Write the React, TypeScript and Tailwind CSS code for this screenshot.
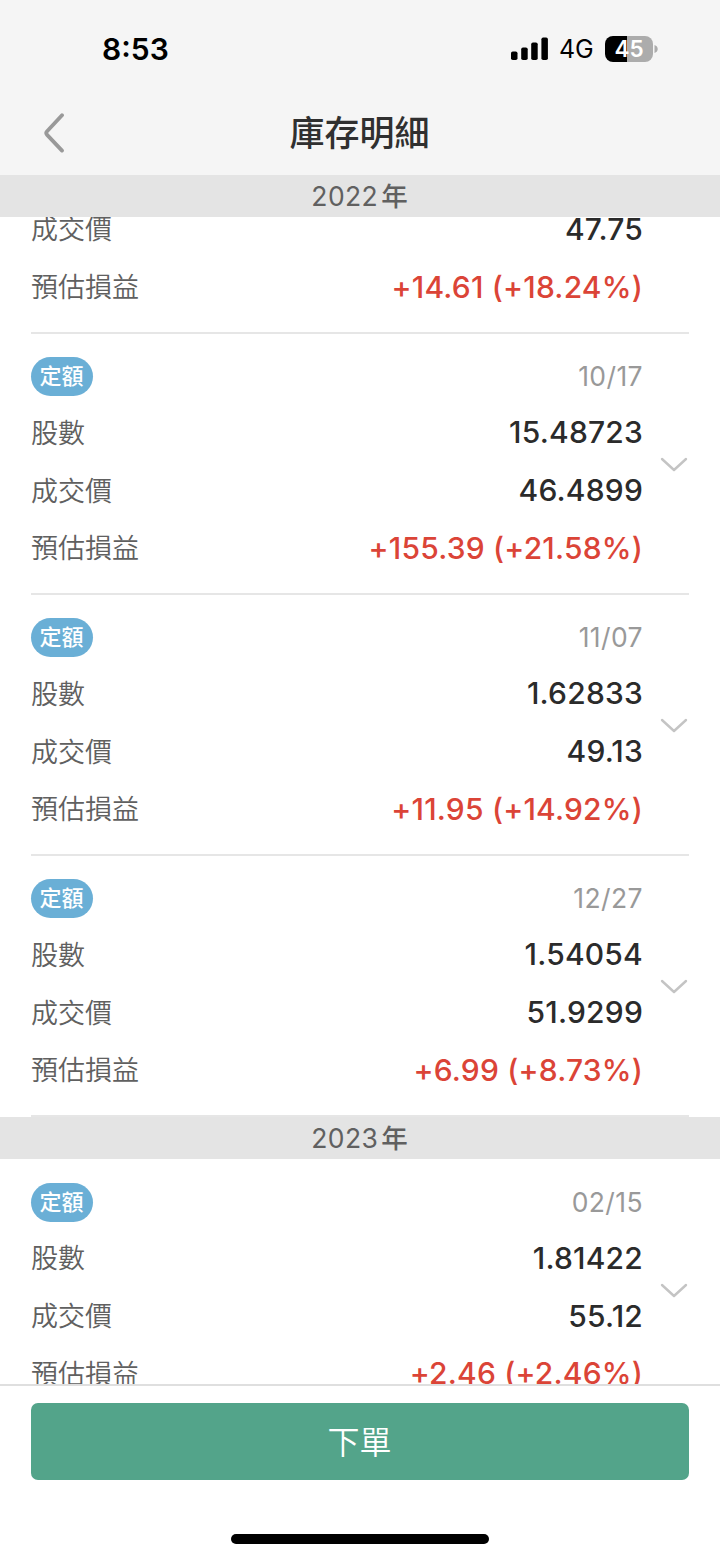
import React from 'react';

type Entry = { date: string; shares: string; price: string; gain: string };

const entries2022: Entry[] = [
  { date: '10/17', shares: '15.48723', price: '46.4899', gain: '+155.39 (+21.58%)' },
  { date: '11/07', shares: '1.62833', price: '49.13', gain: '+11.95 (+14.92%)' },
  { date: '12/27', shares: '1.54054', price: '51.9299', gain: '+6.99 (+8.73%)' },
];

function Row({ label, value, red = false }: { label: string; value: string; red?: boolean }) {
  return (
    <div className="flex h-[57.7px] shrink-0 items-center justify-between">
      <span className="pt-[1px] text-[27px] font-[350] text-[#606060]">{label}</span>
      <span className={red ? 'pb-[1px] text-[30px] font-medium tracking-[0.2px] text-[#db4437]' : 'pb-[1px] text-[30px] font-medium tracking-[0.2px] text-[#2b2b2b]'}>{value}</span>
    </div>
  );
}

function YearBar({ year }: { year: string }) {
  return (
    <div className="flex h-[42px] shrink-0 items-center justify-center bg-[#e4e4e4] pr-[1px] text-[26.5px] text-[#606060]">
      <span className="tracking-[0.4px]">{year}</span>
      <span className="ml-[3px] font-medium">年</span>
    </div>
  );
}

function EntryCard({ entry }: { entry: Entry }) {
  return (
    <section className="mx-[31px] flex h-[261px] shrink-0 border-b-2 border-[#e6e6e6]">
      <div className="flex w-[612px] flex-col pt-[23px]">
        <div className="flex h-[39px] items-center justify-between">
          <span className="flex h-[39px] w-[62px] items-center justify-center rounded-full bg-[#6aafd6] pr-[1px] pb-[1px] text-[22px] font-medium text-white">定額</span>
          <span className="text-[26.5px] tracking-[0.4px] text-[#999999]">{entry.date}</span>
        </div>
        <div className="h-[8px]" />
        <Row label="股數" value={entry.shares} />
        <Row label="成交價" value={entry.price} />
        <Row label="預估損益" value={entry.gain} red />
      </div>
      <svg className="mt-[123px] ml-[17px] h-[16px] w-[28px] shrink-0" viewBox="0 0 28 16" fill="none" stroke="#c4c4c4" strokeWidth="2.4" strokeLinecap="round" strokeLinejoin="round">
        <path d="M2 2L14 13L26 2" />
      </svg>
    </section>
  );
}

export default function App() {
  return (
    <div className="flex h-[1559px] w-[720px] flex-col overflow-hidden bg-white font-[Inter,'Noto_Sans_CJK_TC',sans-serif] leading-none">
      <header className="h-[175px] shrink-0 bg-[#f5f5f5]">
        <div className="flex h-[97px] items-center justify-between pr-[62px] pl-[102px]">
          <span className="text-[30px] font-semibold text-black">8:53</span>
          <div className="flex items-center">
            <svg className="h-[24px] w-[38px]" viewBox="0 0 38 24" fill="black">
              <rect x="0" y="14.5" width="6.5" height="8.5" rx="1.8" />
              <rect x="10.2" y="10.5" width="6.5" height="12.5" rx="1.8" />
              <rect x="20.2" y="5.5" width="6.5" height="17.5" rx="1.8" />
              <rect x="30.4" y="0.5" width="6.5" height="22.5" rx="1.8" />
            </svg>
            <span className="mt-[2px] ml-[10px] w-[34px] text-[25px] tracking-[-0.2px]">4G</span>
            <div className="ml-[12px] flex h-[26px] w-[48px] items-center justify-center rounded-[8px] bg-[linear-gradient(to_right,#000_21.5px,#acacac_21.5px)] pt-[1px] text-[22.5px] font-semibold text-white">45</div>
            <svg className="ml-[1px] h-[8px] w-[4px]" viewBox="0 0 4 8" fill="#acacac">
              <path d="M0.5 0C4.8 1.3 4.8 6.7 0.5 8Z" />
            </svg>
          </div>
        </div>
        <div className="grid h-[72px] grid-cols-[1fr_auto_1fr] items-center">
          <svg className="ml-[42px] h-[40px] w-[24px]" viewBox="0 0 24 40" fill="none" stroke="#999999" strokeWidth="3.8" strokeLinecap="round" strokeLinejoin="round">
            <path d="M20 2.2L5.1 18.3Q3.4 20.1 5.1 21.9L20 37.6" />
          </svg>
          <h1 className="pr-[1px] text-[35px] font-medium text-[#303030]">庫存明細</h1>
        </div>
      </header>
      <YearBar year="2022" />
      <main className="flex h-[1167px] shrink-0 flex-col overflow-hidden">
        <div className="mx-[31px] flex h-[117px] shrink-0 flex-col justify-end overflow-hidden border-b-2 border-[#e6e6e6] pr-[46px] pb-[16px]">
          <Row label="成交價" value="47.75" />
          <Row label="預估損益" value="+14.61 (+18.24%)" red />
        </div>
        {entries2022.map((entry) => <EntryCard key={entry.date} entry={entry} />)}
        <YearBar year="2023" />
        <div className="flex shrink-0 flex-col pt-[0.5px]">
          <EntryCard entry={{ date: '02/15', shares: '1.81422', price: '55.12', gain: '+2.46 (+2.46%)' }} />
        </div>
      </main>
      <footer className="flex h-[175px] shrink-0 flex-col items-center border-t-2 border-[#dfdfdf] px-[31px] pt-[17px]">
        <button className="h-[77px] w-full shrink-0 rounded-[7px] bg-[#53a48a] pt-[3px] pr-[1px] text-[32px] font-[350] text-white">下單</button>
        <div className="mt-[54px] h-[10px] w-[258px] shrink-0 rounded-full bg-black" />
      </footer>
    </div>
  );
}
